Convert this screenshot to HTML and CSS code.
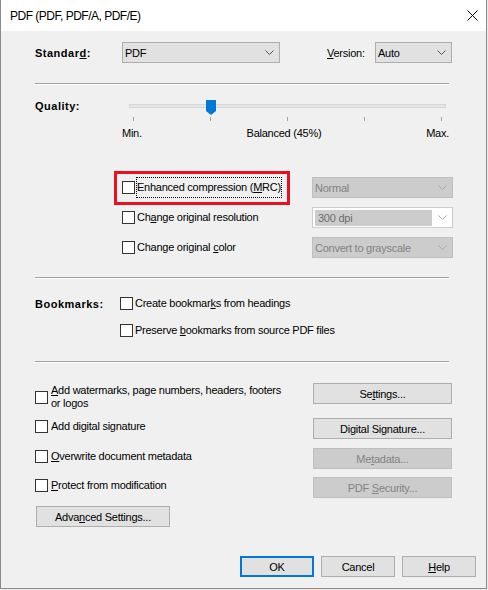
FILE: index.html
```html
<!DOCTYPE html>
<html lang="en">
<head>
    <meta charset="UTF-8">
    <meta name="viewport" content="width=device-width, initial-scale=1.0">
    <title>PDF (PDF, PDF/A, PDF/E)</title>
    <link rel="stylesheet" href="styles.css">
</head>
<body>

<div class="dialog">
    <div class="titlebar">
        <span class="title">PDF (PDF, PDF/A, PDF/E)</span>
        <svg class="close" width="11" height="11" viewBox="0 0 11 11">
            <path d="M0.5 0.5 L10.5 10.5 M10.5 0.5 L0.5 10.5" stroke="#000" stroke-width="1"/>
        </svg>
    </div>

    <div class="content">
        <!-- Standaard en versie -->
        <div class="standard-row">
            <span class="bold standard-label">Standar<u>d</u>:</span>
            <div class="combo combo-standard">
                <span>PDF</span>
                <svg class="chev" width="9" height="5" viewBox="0 0 9 5"><path d="M0.5 0.5 L4.5 4.5 L8.5 0.5" fill="none" stroke="currentColor"/></svg>
            </div>
            <span class="version-label"><u>V</u>ersion:</span>
            <div class="combo combo-version">
                <span>Auto</span>
                <svg class="chev" width="9" height="5" viewBox="0 0 9 5"><path d="M0.5 0.5 L4.5 4.5 L8.5 0.5" fill="none" stroke="currentColor"/></svg>
            </div>
        </div>

        <div class="sep"></div>

        <!-- Kwaliteit schuifregelaar -->
        <div class="quality">
            <div class="quality-top">
                <span class="bold quality-label">Quality:</span>
                <div class="slider">
                    <div class="track"></div>
                    <svg class="thumb" width="10" height="15" viewBox="0 0 10 15">
                        <path d="M0 0 H10 V11 L5 15 L0 11 Z" fill="#0078d7"/>
                    </svg>
                    <div class="ticks"><i></i><i></i><i></i><i></i><i></i></div>
                </div>
            </div>
            <div class="scale-labels">
                <span>Min.</span>
                <span>Balanced (45%)</span>
                <span>Max.</span>
            </div>
        </div>

        <!-- Beeldopties -->
        <div class="img-opts">
            <div class="opt highlighted">
                <span class="highlight"></span>
                <span class="check"></span>
                <span class="opt-text focused">Enhanced compression (<u>M</u>RC)</span>
            </div>
            <div class="combo combo-disabled">
                <span>Normal</span>
                <svg class="chev" width="9" height="5" viewBox="0 0 9 5"><path d="M0.5 0.5 L4.5 4.5 L8.5 0.5" fill="none" stroke="currentColor"/></svg>
            </div>

            <div class="opt">
                <span class="check"></span>
                <span class="opt-text">Ch<u>a</u>nge original resolution</span>
            </div>
            <div class="combo combo-edit-disabled">
                <span class="combo-edit">300 dpi</span>
                <svg class="chev" width="9" height="5" viewBox="0 0 9 5"><path d="M0.5 0.5 L4.5 4.5 L8.5 0.5" fill="none" stroke="currentColor"/></svg>
            </div>

            <div class="opt">
                <span class="check"></span>
                <span class="opt-text">Change original <u>c</u>olor</span>
            </div>
            <div class="combo combo-disabled">
                <span>Convert to grayscale</span>
                <svg class="chev" width="9" height="5" viewBox="0 0 9 5"><path d="M0.5 0.5 L4.5 4.5 L8.5 0.5" fill="none" stroke="currentColor"/></svg>
            </div>
        </div>

        <div class="sep sep-img"></div>

        <!-- Bladwijzers -->
        <div class="bookmarks">
            <span class="bold bookmarks-label">Bookmarks:</span>
            <div class="opt">
                <span class="check"></span>
                <span class="opt-text">Create bookmar<u>k</u>s from headings</span>
            </div>
            <div class="opt bookmarks-second">
                <span class="check"></span>
                <span class="opt-text">Preserve <u>b</u>ookmarks from source PDF files</span>
            </div>
        </div>

        <div class="sep sep-bm"></div>

        <!-- Extra opties met knoppen -->
        <div class="extras">
            <div class="extra extra-first">
                <span class="check"></span>
                <span class="extra-text wrap"><span class="line"><u>A</u>dd watermarks, page numbers, headers, footers</span><span class="line">or logos</span></span>
            </div>
            <button class="btn">Se<u>t</u>tings...</button>

            <div class="extra">
                <span class="check"></span>
                <span class="extra-text">Add digital signature</span>
            </div>
            <button class="btn">Di<u>g</u>ital Signature...</button>

            <div class="extra">
                <span class="check"></span>
                <span class="extra-text"><u>O</u>verwrite document metadata</span>
            </div>
            <button class="btn btn-disabled">Me<u>t</u>adata...</button>

            <div class="extra">
                <span class="check"></span>
                <span class="extra-text"><u>P</u>rotect from modification</span>
            </div>
            <button class="btn btn-disabled">PDF <u>S</u>ecurity...</button>
        </div>

        <button class="btn btn-advanced">Adva<u>n</u>ced Settings...</button>

        <div class="footer">
            <button class="btn btn-footer btn-default">OK</button>
            <button class="btn btn-footer">Cancel</button>
            <button class="btn btn-footer"><u>H</u>elp</button>
        </div>
    </div>
</div>

</body>
</html>
```

FILE: styles.css
```css
body {
    margin: 0;
    background-color: #ececec;
    font-family: "Liberation Sans", Arial, sans-serif;
    font-size: 11px;
    letter-spacing: -0.25px;
    color: #000000;
}

u {
    text-decoration-thickness: 1px;
    text-underline-offset: 1px;
}

.dialog {
    box-sizing: border-box;
    width: 487px;
    height: 589px;
    background-color: #f0f0f0;
    border: 1px solid #8a8a8a;
    border-top: none;
}

.titlebar {
    height: 31px;
    background-color: #ffffff;
    display: flex;
    align-items: center;
    justify-content: space-between;
    padding: 0 8px 0 9px;
}

.title {
    font-size: 12px;
    letter-spacing: -0.5px;
}

.content {
    padding-left: 34px;
}

.bold {
    font-weight: bold;
    letter-spacing: 0.5px;
}

/* combobox */
.combo {
    box-sizing: border-box;
    height: 21px;
    display: flex;
    align-items: center;
    justify-content: space-between;
    border: 1px solid #adadad;
    background-color: #e1e1e1;
    padding: 0 5px 0 2px;
    color: #000000;
}

.combo .chev {
    color: #555555;
}

.combo-disabled {
    background-color: #cccccc;
    border-color: #bfbfbf;
    color: #838383;
}

.combo-disabled .chev {
    color: #a8a8a8;
}

.combo-edit-disabled {
    background-color: #ffffff;
    border-color: #cccccc;
    padding-left: 2px;
}

.combo-edit-disabled .chev {
    color: #a8a8a8;
}

.combo-edit {
    box-sizing: border-box;
    width: 117px;
    height: 16px;
    line-height: 16px;
    background-color: #cccccc;
    color: #6d6d6d;
    padding-left: 3px;
}

/* standaard rij */
.standard-row {
    display: flex;
    align-items: center;
    margin-top: 11px;
    height: 21px;
}

.standard-label {
    width: 87px;
}

.combo-standard {
    width: 158px;
}

.version-label {
    margin-left: 47px;
    width: 48px;
}

.combo-version {
    width: 77px;
}

.sep {
    width: 414px;
    height: 0;
    border-top: 1px solid #a0a0a0;
    border-bottom: 1px solid #ffffff;
    margin-top: 20px;
}

.sep-img {
    margin-top: 19px;
}

.sep-bm {
    margin-top: 21px;
}

/* kwaliteit */
.quality {
    margin-top: 15px;
}

.quality-top {
    display: flex;
}

.quality-label {
    width: 94px;
    line-height: 13px;
}

.slider {
    position: relative;
    width: 317px;
    padding-top: 4px;
}

.track {
    box-sizing: border-box;
    height: 4px;
    background-color: #e7e7e7;
    border: 1px solid #d6d6d6;
}

.thumb {
    position: absolute;
    left: 77px;
    top: 0;
}

.ticks {
    display: flex;
    justify-content: space-between;
    padding: 0 4px;
    margin-top: 9px;
}

.ticks i {
    width: 1px;
    height: 4px;
    background-color: #a0a0a0;
}

.scale-labels {
    display: flex;
    justify-content: space-between;
    margin-left: 87px;
    width: 327px;
    margin-top: 6px;
    line-height: 13px;
}

/* beeldopties */
.img-opts {
    margin-top: 37px;
    margin-left: 87px;
    display: grid;
    grid-template-columns: 190px 141px;
    grid-template-rows: 21px 21px 21px;
    row-gap: 9px;
}

.opt {
    display: flex;
    align-items: center;
}

.highlighted {
    position: relative;
}

.highlight {
    position: absolute;
    left: -8px;
    top: -6px;
    width: 176px;
    height: 34px;
    box-sizing: border-box;
    border: 3px solid #e81123;
}

.check {
    flex: none;
    box-sizing: border-box;
    width: 13px;
    height: 13px;
    border: 1px solid #333333;
    background-color: #ffffff;
}

.opt-text {
    margin-left: 1px;
    border: 1px solid transparent;
    line-height: 19px;
    white-space: nowrap;
}

.focused {
    border: 1px dotted #000000;
}

/* bladwijzers */
.bookmarks {
    margin-top: 15px;
    display: grid;
    grid-template-columns: 85px auto;
    grid-template-rows: 19px 19px;
    row-gap: 8px;
}

.bookmarks-label {
    align-self: center;
}

.bookmarks-second {
    grid-column: 2;
}

/* extra opties */
.extras {
    margin-top: 20px;
    display: grid;
    grid-template-columns: 278px 139px;
    grid-template-rows: 27px 22px 21px 21px;
    row-gap: 8px;
}

.extra {
    display: flex;
    align-items: flex-start;
}

.extra .check {
    margin-top: 2px;
}

.extra-text {
    margin-left: 3px;
    margin-top: 2px;
    line-height: 13px;
    white-space: nowrap;
}

.extra-first .check {
    margin-top: 8px;
}

.extra-first .extra-text {
    margin-top: 1px;
}

.wrap {
    display: flex;
    flex-direction: column;
}

/* knoppen */
.btn {
    box-sizing: border-box;
    height: 21px;
    padding: 0;
    border: 1px solid #adadad;
    background-color: #e1e1e1;
    font-family: inherit;
    font-size: 11px;
    letter-spacing: -0.25px;
    color: #000000;
    text-align: center;
}

.btn-disabled {
    background-color: #cccccc;
    border-color: #bfbfbf;
    color: #838383;
}

.btn-advanced {
    display: block;
    margin-top: 8px;
    margin-left: 1px;
    width: 134px;
}

.footer {
    display: flex;
    justify-content: flex-end;
    gap: 7px;
    margin-top: 29px;
    padding-right: 10px;
}

.btn-footer {
    width: 74px;
}

.btn-default {
    border: 2px solid #0078d7;
}
```
